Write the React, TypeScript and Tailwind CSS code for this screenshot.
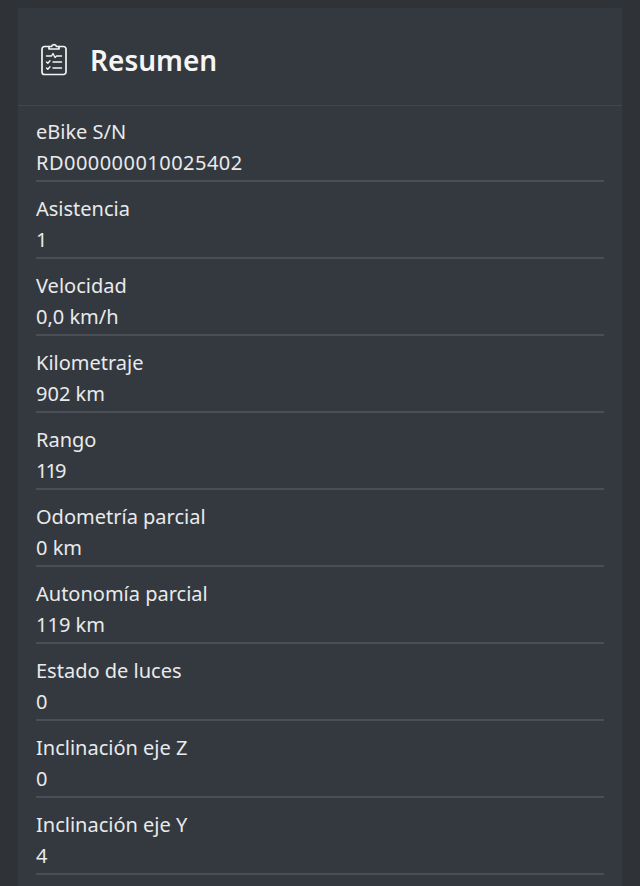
const rows = [
  { label: "eBike S/N", value: "RD000000010025402", valueClass: "tracking-[0.47px]" },
  { label: "Asistencia", value: "1", valueClass: "" },
  { label: "Velocidad", value: "0,0 km/h", valueClass: "" },
  { label: "Kilometraje", value: "902 km", valueClass: "" },
  { label: "Rango", value: "119", valueClass: "tracking-[-2px]" },
  { label: "Odometría parcial", value: "0 km", valueClass: "" },
  { label: "Autonomía parcial", value: "119 km", valueClass: "" },
  { label: "Estado de luces", value: "0", valueClass: "" },
  { label: "Inclinación eje Z", value: "0", valueClass: "" },
  { label: "Inclinación eje Y", value: "4", valueClass: "" },
];

const ClipboardIcon = () => (
  <svg width="28" height="34" viewBox="0 0 28 34" fill="none" stroke="#f3f4f4" strokeWidth="1.7" strokeLinecap="round" strokeLinejoin="round">
    <path d="M9 4.5H4.5A2.5 2.5 0 0 0 2 7v23a2.5 2.5 0 0 0 2.5 2.5h19A2.5 2.5 0 0 0 26 30V7a2.5 2.5 0 0 0-2.5-2.5H19" />
    <path d="M9 7V4.5h2.5a2.6 2.6 0 0 1 5 0H19V7z" />
    <path d="M6.5 14h5l1.5-2.5 2 4 1.5-1.5h5" strokeWidth="1.4" />
    <path d="M6.5 20l1.3 1.3 2.2-2.6M13 20h8.5M6.5 26l1.3 1.3 2.2-2.6M13 26h8.5" strokeWidth="1.4" />
  </svg>
);

export default function App() {
  return (
    <div className="h-[886px] overflow-hidden bg-[#2f3338] px-[18px] pt-2 font-['Noto_Sans',sans-serif] text-[#e9eaeb]">
      <div className="h-full bg-[#343940]">
        <div className="flex h-[98px] items-center gap-[22px] border-b border-[#43474d] pl-[22px] pt-[4px]">
          <ClipboardIcon />
          <h1 className="mt-[2px] text-[28px] font-semibold leading-none text-[#f4f5f5]">Resumen</h1>
        </div>
        <div className="-mt-px px-[18px]">
          {rows.map((row) => (
            <div key={row.label} className="flex h-[77px] flex-col border-b-2 border-[#4b4f55] pt-[11px] text-[20px] leading-[31px]">
              <span>{row.label}</span>
              <span className={row.valueClass}>{row.value}</span>
            </div>
          ))}
        </div>
      </div>
    </div>
  );
}
